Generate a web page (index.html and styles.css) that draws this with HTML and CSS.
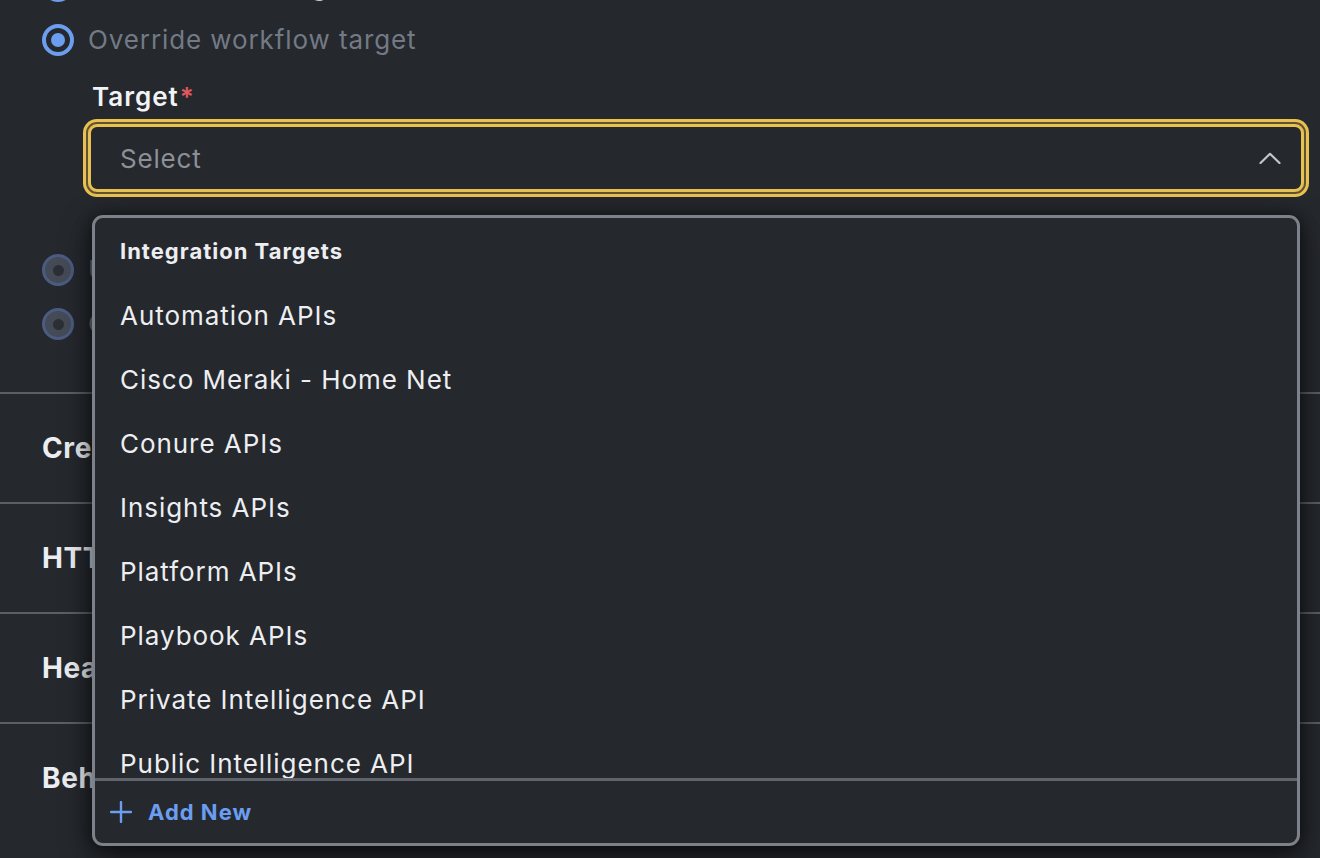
FILE: index.html
```html
<!DOCTYPE html>
<html lang="en">
<head>
<meta charset="utf-8">
<title>Target select</title>
<link rel="stylesheet" href="styles.css">
</head>
<body>
<div class="page">
  <div class="options">
    <div class="radio-row">
      <span class="radio radio-on"></span>
      <span class="radio-label light">Use workflow target</span>
    </div>
    <div class="radio-row">
      <span class="radio radio-on"></span>
      <span class="radio-label">Override workflow target</span>
    </div>
    <div class="field">
      <div class="field-label">Target<span class="req">*</span></div>
      <div class="select">
        <span class="placeholder">Select</span>
        <svg class="chevron" width="22" height="12" viewBox="0 0 22 12" aria-hidden="true">
          <path d="M1.5 11 L11 1.8 L20.5 11" fill="none" stroke="#c3c7cd" stroke-width="2.2" stroke-linecap="round" stroke-linejoin="round"/>
        </svg>
      </div>
    </div>
    <div class="radio-row gap-top">
      <span class="radio radio-dim"></span>
      <span class="radio-label">Use environment target</span>
    </div>
    <div class="radio-row">
      <span class="radio radio-dim"></span>
      <span class="radio-label">Custom URL</span>
    </div>
  </div>
  <div class="sections">
    <div class="section"><h2 class="section-title">Credentials</h2></div>
    <div class="section"><h2 class="section-title">HTTP Request</h2></div>
    <div class="section"><h2 class="section-title">Headers</h2></div>
    <div class="section"><h2 class="section-title">Behavior</h2></div>
  </div>

  <div class="dropdown">
    <div class="list">
      <div class="group-title">Integration Targets</div>
      <div class="item">Automation APIs</div>
      <div class="item">Cisco Meraki - Home Net</div>
      <div class="item">Conure APIs</div>
      <div class="item">Insights APIs</div>
      <div class="item">Platform APIs</div>
      <div class="item">Playbook APIs</div>
      <div class="item">Private Intelligence API</div>
      <div class="item">Public Intelligence API</div>
      <div class="item">Threat Intelligence API</div>
    </div>
    <div class="footer">
      <svg class="plus" width="22" height="22" viewBox="0 0 22 22" aria-hidden="true">
        <path d="M11 1 V21 M1 11 H21" stroke="#6b9df0" stroke-width="2.4" stroke-linecap="round"/>
      </svg>
      <span class="add-new">Add New</span>
    </div>
  </div>
</div>
</body>
</html>
```

FILE: styles.css
```css
html, body {
  margin: 0;
  padding: 0;
  background: #25282d;
  font-family: Inter, "Noto Sans", "Liberation Sans", sans-serif;
  color: #eceef1;
}

.page {
  position: relative;
  width: 1320px;
  height: 858px;
  overflow: hidden;
}

.options {
  margin-top: -41px;
  padding-left: 42px;
}

.radio-row {
  display: flex;
  align-items: center;
  height: 54px;
  gap: 14px;
}

.radio-row.gap-top {
  margin-top: 51px;
}

.radio {
  box-sizing: border-box;
  width: 32px;
  height: 32px;
  border-radius: 50%;
  display: flex;
  align-items: center;
  justify-content: center;
  flex: none;
}

.radio::after {
  content: "";
  display: block;
  border-radius: 50%;
}

.radio-on {
  border: 4px solid #6c9ef0;
}

.radio-on::after {
  width: 14px;
  height: 14px;
  background: #6c9ef0;
}

.radio-dim {
  border: 3px solid #4b5c82;
  background: #454b56;
}

.radio-dim::after {
  width: 11px;
  height: 11px;
  background: #2c2f35;
}

.radio-label {
  font-size: 26px;
  letter-spacing: 0.9px;
  color: #737a85;
  line-height: 34px;
  white-space: nowrap;
}

.radio-label.light {
  color: #c5c8cd;
}

.field {
  margin-left: 42px;
  margin-top: 13px;
}

.field-label {
  padding-left: 8px;
  font-size: 26px;
  font-weight: 600;
  letter-spacing: 1px;
  line-height: 34px;
  color: #f2f3f5;
}

.req {
  color: #e0585e;
  margin-left: 1px;
}

.select {
  box-sizing: border-box;
  margin-top: 10px;
  margin-left: 4px;
  width: 1216px;
  height: 68px;
  border: 3px solid #e9c152;
  border-radius: 9px;
  box-shadow: 0 0 0 2px #5f5332, 0 0 0 5px #e9c152;
  display: flex;
  align-items: center;
  justify-content: space-between;
  padding: 0 20px 0 29px;
}

.placeholder {
  font-size: 26px;
  letter-spacing: 0.8px;
  color: #8c9098;
}

.chevron {
  display: block;
}

.sections {
  margin-top: 41px;
}

.section {
  box-sizing: border-box;
  height: 110px;
  border-top: 2px solid #5b5f67;
  display: flex;
  align-items: center;
  padding-left: 42px;
}

.section-title {
  margin: 0;
  font-size: 28px;
  font-weight: 700;
  letter-spacing: 0.6px;
  color: #eceef1;
}

.dropdown {
  position: absolute;
  left: 92px;
  top: 215px;
  box-sizing: border-box;
  width: 1208px;
  height: 631px;
  border: 3px solid #7d828a;
  border-radius: 11px;
  background: #25282d;
  box-shadow: 0 10px 30px rgba(0, 0, 0, 0.6), 0 0 16px rgba(0, 0, 0, 0.4);
  display: flex;
  flex-direction: column;
  overflow: hidden;
}

.list {
  height: 560px;
  overflow: hidden;
  flex: none;
}

.group-title {
  height: 66px;
  box-sizing: border-box;
  padding: 18px 0 0 25px;
  font-size: 22px;
  font-weight: 700;
  letter-spacing: 1px;
  line-height: 30px;
  color: #eceef1;
}

.item {
  height: 64px;
  line-height: 64px;
  padding-left: 25px;
  font-size: 26px;
  letter-spacing: 0.95px;
  color: #eceef1;
  white-space: nowrap;
}

.footer {
  flex: 1;
  border-top: 3px solid #5f636b;
  display: flex;
  align-items: center;
  padding-left: 15px;
  gap: 16px;
}

.plus {
  display: block;
}

.add-new {
  font-size: 22px;
  font-weight: 700;
  letter-spacing: 1px;
  color: #6b9df0;
}
```
